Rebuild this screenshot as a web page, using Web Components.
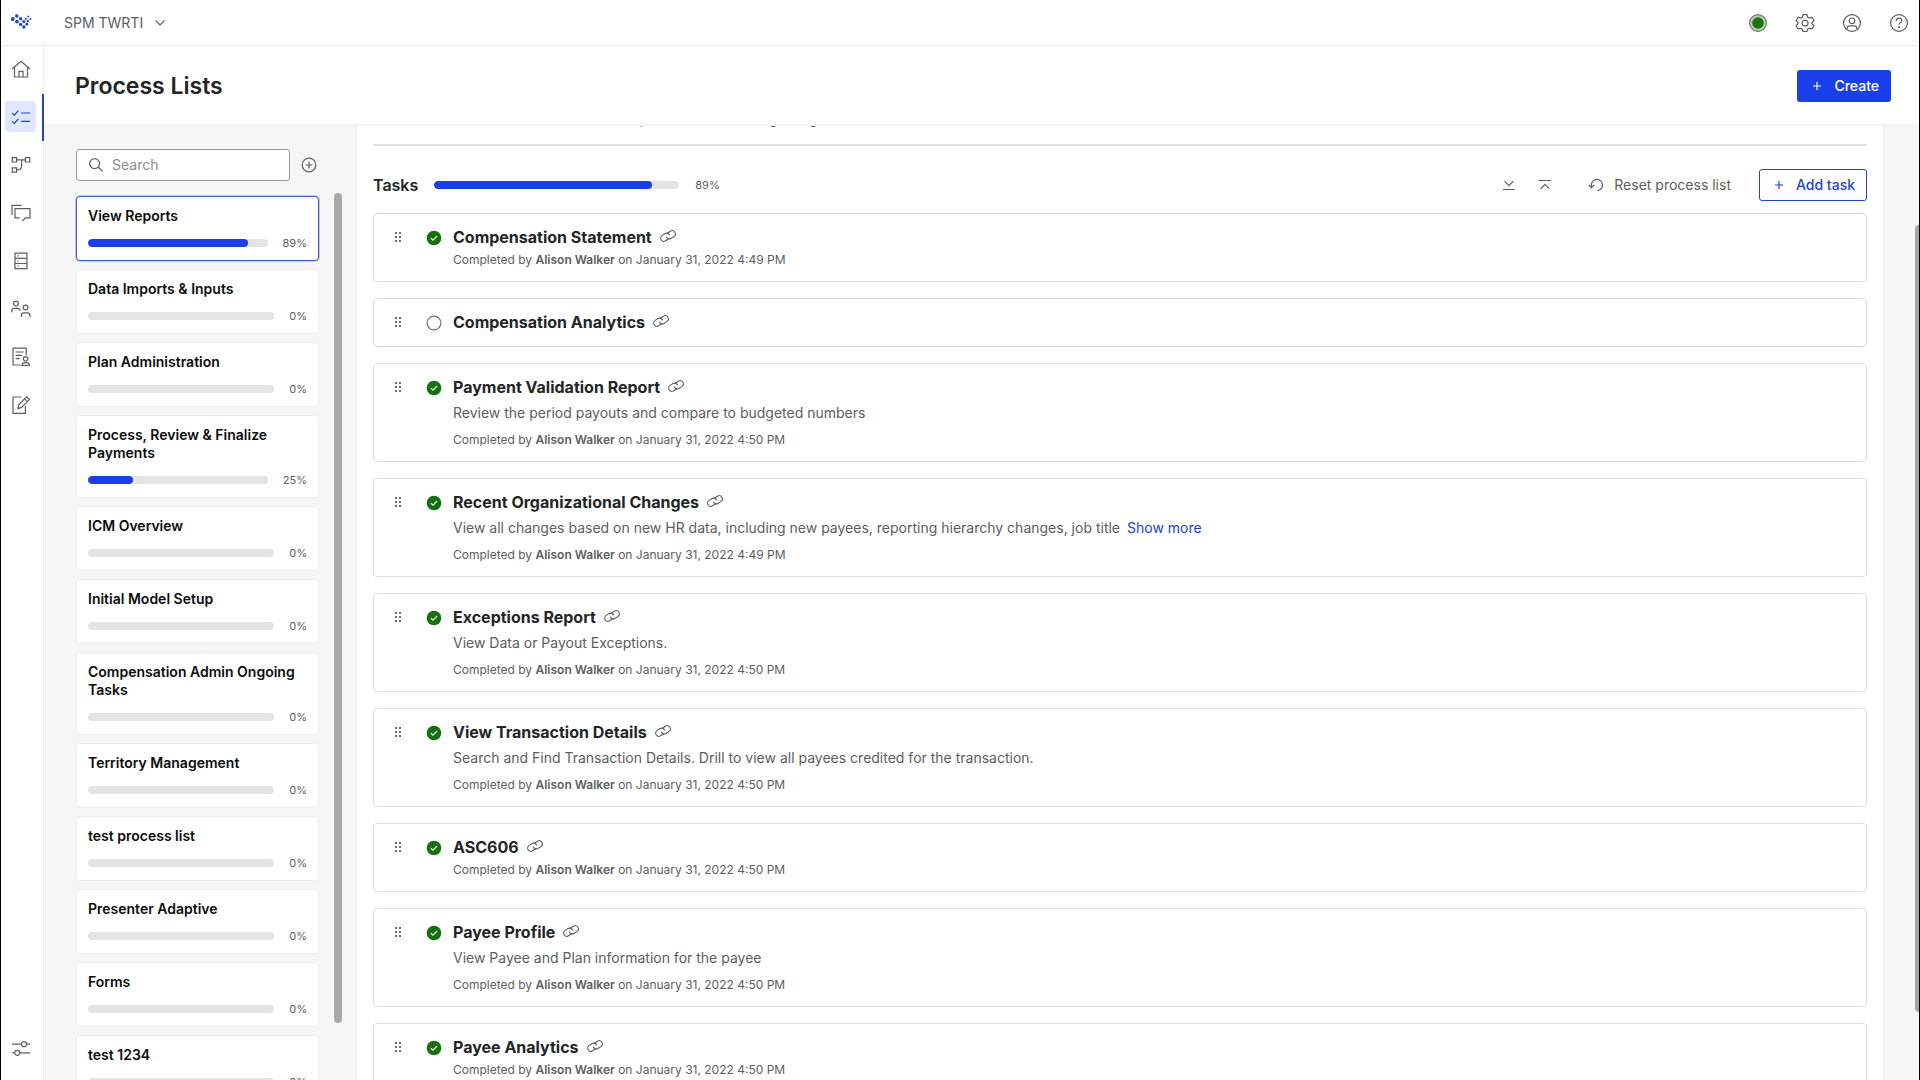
<!DOCTYPE html>
<html lang="en">
<head>
<meta charset="utf-8">
<title>Process Lists</title>
<style>
  html, body { height: 100%; margin: 0; }
  body {
    --ink: #222426;
    --muted: #5c5e60;
    --line: #dedede;
    --hairline: #f0f0f0;
    --surface: #f6f6f6;
    --brand: #1a3fea;
    --brand-ink: #2243cf;
    font: 14px/20px Inter, "Liberation Sans", sans-serif;
    color: var(--muted);
    background: #fff;
    overflow: hidden;
  }
</style>
</head>
<body>
<app-shell>
  <top-bar slot="top" workspace="SPM TWRTI"></top-bar>
  <side-nav slot="nav"></side-nav>
  <page-header slot="header" heading="Process Lists"></page-header>
  <list-panel slot="lists">
    <process-card name="View Reports" percent="89" selected></process-card>
    <process-card name="Data Imports &amp; Inputs" percent="0"></process-card>
    <process-card name="Plan Administration" percent="0"></process-card>
    <process-card name="Process, Review &amp; Finalize Payments" percent="25"></process-card>
    <process-card name="ICM Overview" percent="0"></process-card>
    <process-card name="Initial Model Setup" percent="0"></process-card>
    <process-card name="Compensation Admin Ongoing Tasks" percent="0"></process-card>
    <process-card name="Territory Management" percent="0"></process-card>
    <process-card name="test process list" percent="0"></process-card>
    <process-card name="Presenter Adaptive" percent="0"></process-card>
    <process-card name="Forms" percent="0"></process-card>
    <process-card name="test 1234" percent="0"></process-card>
  </list-panel>
  <task-panel slot="tasks" percent="89">
    <span slot="description">Use this list to access all the standard reports and an existing design</span>
    <task-item name="Compensation Statement" by="Alison Walker" on="January 31, 2022 4:49 PM"></task-item>
    <task-item name="Compensation Analytics"></task-item>
    <task-item name="Payment Validation Report" by="Alison Walker" on="January 31, 2022 4:50 PM">Review the period payouts and compare to budgeted numbers</task-item>
    <task-item name="Recent Organizational Changes" by="Alison Walker" on="January 31, 2022 4:49 PM" more>View all changes based on new HR data, including new payees, reporting hierarchy changes, job title</task-item>
    <task-item name="Exceptions Report" by="Alison Walker" on="January 31, 2022 4:50 PM">View Data or Payout Exceptions.</task-item>
    <task-item name="View Transaction Details" by="Alison Walker" on="January 31, 2022 4:50 PM">Search and Find Transaction Details. Drill to view all payees credited for the transaction.</task-item>
    <task-item name="ASC606" by="Alison Walker" on="January 31, 2022 4:50 PM"></task-item>
    <task-item name="Payee Profile" by="Alison Walker" on="January 31, 2022 4:50 PM">View Payee and Plan information for the payee</task-item>
    <task-item name="Payee Analytics" by="Alison Walker" on="January 31, 2022 4:50 PM"></task-item>
  </task-panel>
</app-shell>

<script>
const BASE = `
  *, *::before, *::after { box-sizing: border-box; }
  :host { display: block; box-sizing: border-box; }
  button { font: inherit; color: inherit; background: none; border: 0; padding: 0; margin: 0; display: inline-flex; align-items: center; justify-content: center; cursor: pointer; }
  a { color: inherit; text-decoration: none; }
  h1, h2, h3, p { margin: 0; }
`;

class BaseElement extends HTMLElement {
  connectedCallback() {
    if (this.shadowRoot) return;
    this.attachShadow({ mode: 'open' }).innerHTML = `<style>${BASE}${this.styles()}</style>${this.markup()}`;
  }
  text(name) {
    return (this.getAttribute(name) || '').replace(/&/g, '&amp;').replace(/</g, '&lt;');
  }
}

/* Each icon: [width, height, body]. Strokes use the current colour. */
const ICONS = {
  logo: [22, 17, `<g fill="#2445c8" stroke="none"><circle cx="2.8" cy="7" r="1.9"/><circle cx="6.8" cy="4" r="1.8"/><circle cx="7" cy="9.6" r="1.9"/><circle cx="10.6" cy="6.8" r="1.8"/><circle cx="10.6" cy="12.4" r="1.7"/><circle cx="13.8" cy="9.6" r="1.6"/><circle cx="13.8" cy="15" r="1.7"/><circle cx="16.8" cy="12.2" r="1.4"/><circle cx="15.8" cy="6.8" r="1.1"/><circle cx="18.2" cy="4.6" r="1"/><circle cx="17.8" cy="9" r="1.2"/><circle cx="20.4" cy="7" r="1"/></g>`],
  chevron: [12, 8, `<path d="M1.5 1.5 6 6l4.5-4.5"/>`],
  home: [20, 18, `<path d="M1 9 10 1.2 19 9M3.5 7.2V17h13V7.2M8 17v-5.6h4V17"/>`],
  checklist: [20, 16, `<path d="M1.2 4.2 3.4 6.2 7.4 1.6M1.2 12.4l2.2 2 4-4.6M10 4h9M10 12.4h9"/>`],
  flow: [20, 18, `<path d="M1.2 1.6h4.4V6H1.2zM14.4 1.6h4.4V6h-4.4zM1.2 11.8h4.4v4.4H1.2zM5.6 3.8h8.8M10.6 3.8v6.2q0 4-5 4"/>`],
  chat: [20, 18, `<path d="M4 4.6h15v9.2h-4.4L11.4 17M4 4.6v9.2h4.6M1 11V1.4h9.6"/>`],
  database: [14, 18, `<path d="M1 1.2h12v15.4H1zM1 6.3h12M1 11.5h12M3 3.8h1.4M3 9h1.4M3 14h1.4"/>`],
  people: [20, 18, `<circle cx="5" cy="3.6" r="2.4"/><circle cx="14.6" cy="7.6" r="2.4"/><path d="M.8 12.4V11q0-2.6 2.8-2.6h2.8q2.4 0 2.6 2.2M10.4 17v-1.4q0-2.8 2.6-2.8h3.2q2.8 0 2.8 2.8V17"/>`],
  report: [20, 20, `<path d="M9.4 18H2V1.2h13.2v7M4.6 5h8M4.6 8.4h6.4M4.6 11.6h4"/><circle cx="14.6" cy="11.8" r="2.2"/><path d="M11 18.4q.2-2.8 2.6-2.8h2q2.6 0 2.8 2.8z"/>`],
  edit: [20, 20, `<path d="M10.4 2H2v16.4h12.4V11M6.8 13.6l1-4L15.6 1.8l2.8 2.8-7.8 7.8zM13.6 3.8l2.8 2.8"/>`],
  sliders: [20, 17, `<path d="M1 4.2h9.4M15.6 4.2H19M1 12.8h2.6M9 12.8h10"/><circle cx="13" cy="4.2" r="2.5"/><circle cx="6.2" cy="12.8" r="2.5"/>`],
  presence: [20, 20, `<circle cx="10" cy="10" r="8.4" fill="#bccbb9" stroke="#6d7a6b"/><circle cx="10" cy="10" r="5.8" fill="#1b750f" stroke="none"/>`],
  gear: [20, 20, `<path d="M8 1.6h4l.6 2.5 1.8 1 2.5-.8 2 3.4-1.9 1.8v1.3l1.9 1.8-2 3.4-2.5-.8-1.8 1-.6 2.3H8l-.6-2.3-1.8-1-2.5.8-2-3.4 1.9-1.8V9.5L1.1 7.7l2-3.4 2.5.8 1.8-1z"/><circle cx="10" cy="10.1" r="3"/>`],
  user: [20, 20, `<circle cx="10" cy="10" r="8.4"/><circle cx="10" cy="7.8" r="2.8"/><path d="M5 16.4v-1.2q.2-2.4 2.8-2.4h4.4q2.6 0 2.8 2.4v1.2"/>`],
  help: [20, 20, `<circle cx="10" cy="10" r="8.4"/><path d="M7.2 8q0-2.8 2.8-2.8T12.8 7.8Q12.8 9.2 11 10 10 10.5 10 11.8"/><circle cx="10" cy="14.3" r=".5"/>`],
  plus: [8, 8, `<path d="M4 0v8M0 4h8"/>`],
  search: [16, 16, `<circle cx="6.6" cy="6.6" r="5"/><path d="M10.3 10.3 14.6 14.4"/>`],
  add: [16, 16, `<circle cx="8" cy="8" r="6.8"/><path d="M8 4.6v6.8M4.6 8h6.8"/>`],
  expand: [14, 12, `<path d="M1 10.5h12M2.6 2.2 7 6.6l4.4-4.4"/>`],
  collapse: [14, 12, `<path d="M1 1.5h12M2.6 9.8 7 5.4l4.4 4.4"/>`],
  reset: [16, 14, `<path d="M3.4 9.2V7A5.6 5.6 0 1 1 9.6 12.6M.8 6.8l2.6 2.8L6.2 7"/>`],
  grip: [8, 12, `<g fill="#66686a" stroke="none"><rect x="1" y="0" width="2" height="2"/><rect x="5" y="0" width="2" height="2"/><rect x="1" y="4" width="2" height="2"/><rect x="5" y="4" width="2" height="2"/><rect x="1" y="8" width="2" height="2"/><rect x="5" y="8" width="2" height="2"/></g>`],
  done: [16, 16, `<circle cx="8" cy="8" r="7.3" fill="#17700f" stroke="none"/><path d="M4.9 8.2 7 10.2l4.1-4.2" stroke="#e6f0e5"/>`],
  open: [16, 16, `<circle cx="8" cy="8" r="6.9" stroke="#707274"/>`],
  link: [18, 14, `<g transform="rotate(-32 9 7)" stroke-width="1.1"><path d="M8.6 9.8H4.4a3.2 3.2 0 0 1 0-6.400h3.400a3.200 3.200 0 0 1 3 4"/><path d="M9.400 4.200h4.200a3.200 3.200 0 0 1 0 6.400h-3.400a3.200 3.200 0 0 1-3-4"/></g>`]
};

customElements.define('app-icon', class extends BaseElement {
  styles() { return `:host { display: inline-flex; flex: none; } svg { display: block; }`; }
  markup() {
    const [w, h, body] = ICONS[this.getAttribute('name')];
    return `<svg width="${w}" height="${h}" viewBox="0 0 ${w} ${h}" fill="none" stroke="currentColor" stroke-width="1.2" aria-hidden="true">${body}</svg>`;
  }
});

customElements.define('progress-bar', class extends BaseElement {
  styles() {
    return `
      :host { height: 8px; border-radius: 4px; background: #e4e4e4; overflow: hidden; }
      div { height: 100%; border-radius: 4px; background: var(--brand); }
    `;
  }
  markup() {
    const v = this.getAttribute('value');
    return `<div role="progressbar" aria-valuenow="${v}" style="width:${v}%"></div>`;
  }
});

customElements.define('app-shell', class extends BaseElement {
  styles() {
    return `
      :host { height: 100vh; display: flex; flex-direction: column; border: solid #000; border-width: 0 1px; overflow: hidden; }
      .body { flex: 1; min-height: 0; display: flex; }
      .page { flex: 1; min-width: 0; display: flex; flex-direction: column; }
      .content { flex: 1; min-height: 0; display: flex; background: var(--surface); }
      .gutter { flex: none; width: 35px; display: flex; justify-content: flex-end; padding-top: 99px; }
      .thumb { width: 4px; height: 787px; max-height: 100%; border-radius: 4px 0 0 4px; background: #a6a6a6; }
      ::slotted(task-panel) { flex: 1; min-width: 0; }
    `;
  }
  markup() {
    return `
      <slot name="top"></slot>
      <div class="body">
        <slot name="nav"></slot>
        <div class="page">
          <slot name="header"></slot>
          <div class="content">
            <slot name="lists"></slot>
            <slot name="tasks"></slot>
            <div class="gutter"><div class="thumb"></div></div>
          </div>
        </div>
      </div>`;
  }
});

customElements.define('top-bar', class extends BaseElement {
  styles() {
    return `
      :host { flex: none; height: 46px; border-bottom: 1px solid #e9e9e9; }
      header { height: 100%; display: flex; align-items: center; padding: 0 10px 0 9px; }
      .workspace { margin-left: 32px; gap: 11px; }
      .actions { margin-left: auto; display: flex; gap: 27px; }
    `;
  }
  markup() {
    return `
      <header>
        <a href="#" aria-label="Start"><app-icon name="logo"></app-icon></a>
        <button class="workspace">${this.text('workspace')}<app-icon name="chevron"></app-icon></button>
        <div class="actions">
          <button aria-label="Status"><app-icon name="presence"></app-icon></button>
          <button aria-label="Settings"><app-icon name="gear"></app-icon></button>
          <button aria-label="Account"><app-icon name="user"></app-icon></button>
          <button aria-label="Help"><app-icon name="help"></app-icon></button>
        </div>
      </header>`;
  }
});

customElements.define('side-nav', class extends BaseElement {
  styles() {
    return `
      :host { flex: none; width: 43px; border-right: 1px solid var(--hairline); background: #fff; }
      nav { height: 100%; display: flex; flex-direction: column; gap: 1px; padding-bottom: 7px; }
      a { flex: none; height: 47px; display: flex; align-items: center; padding: 0 0 2px 4px; }
      a:last-child { margin-top: auto; }
      span { width: 31px; height: 31px; border-radius: 4px; display: grid; place-items: center; }
      a[aria-current] { color: var(--brand-ink); margin-right: -1px; border-right: 2px solid var(--brand-ink); }
      a[aria-current] span { background: #dfe6fd; }
    `;
  }
  markup() {
    const items = [['home', 'Home'], ['checklist', 'Process lists'], ['flow', 'Flows'], ['chat', 'Messages'], ['database', 'Data'], ['people', 'People'], ['report', 'Statements'], ['edit', 'Forms'], ['sliders', 'Preferences']];
    return `<nav>${items.map(([icon, label]) =>
      `<a href="#" aria-label="${label}"${icon === 'checklist' ? ' aria-current="page"' : ''}><span><app-icon name="${icon}"></app-icon></span></a>`).join('')}</nav>`;
  }
});

customElements.define('page-header', class extends BaseElement {
  styles() {
    return `
      :host { flex: none; display: flex; align-items: center; justify-content: space-between; height: 80px; padding: 2px 28px 0 31px; border-bottom: 2px solid #f4f4f4; background: #fff; }
      h1 { font-size: 23px; line-height: 32px; font-weight: 600; color: var(--ink); }
      button { height: 32px; padding: 0 12px 0 16px; gap: 13px; border-radius: 3px; background: var(--brand); color: #fff; font-weight: 500; }
    `;
  }
  markup() {
    return `<h1>${this.text('heading')}</h1><button><app-icon name="plus"></app-icon>Create</button>`;
  }
});

customElements.define('list-panel', class extends BaseElement {
  styles() {
    return `
      :host { flex: none; width: 312px; padding: 23px 0 0 32px; display: flex; flex-direction: column; }
      .tools { flex: none; display: flex; align-items: center; gap: 11px; }
      label { width: 214px; height: 32px; display: flex; align-items: center; gap: 8px; padding: 0 11px; border: 1px solid #98999b; border-radius: 3px; background: #fff; }
      input { flex: 1; min-width: 0; border: 0; outline: 0; padding: 0; background: none; font: inherit; color: var(--ink); }
      input::placeholder { color: #8b8d8f; opacity: 1; }
      .scroll { flex: 1; min-height: 0; margin: 12px 0 0 -1px; padding-left: 1px; display: flex; gap: 15px; overflow: hidden; }
      .cards { flex: none; width: 243px; padding-top: 3px; display: flex; flex-direction: column; gap: 8px; }
      .thumb { width: 8px; height: calc(100% - 57px); border-radius: 4px; background: #a9a9a9; }
    `;
  }
  markup() {
    return `
      <div class="tools">
        <label><app-icon name="search"></app-icon><input type="text" placeholder="Search" aria-label="Search"></label>
        <button aria-label="Add process list"><app-icon name="add"></app-icon></button>
      </div>
      <div class="scroll"><div class="cards"><slot></slot></div><div class="thumb"></div></div>`;
  }
});

customElements.define('process-card', class extends BaseElement {
  styles() {
    return `
      :host { flex: none; padding: 10px 11px 9px; border: 1px solid #ededed; border-radius: 4px; background: #fff; cursor: pointer; }
      :host([selected]) { border-color: #3f5bd6; box-shadow: 0 0 0 1px #b9c6fa; }
      h3 { font-size: 14px; line-height: 18px; font-weight: 600; color: #0b0b0c; }
      div { display: flex; align-items: center; gap: 15px; margin-top: 10px; font-size: 11px; line-height: 16px; }
      progress-bar { flex: 1; }
    `;
  }
  markup() {
    const p = this.text('percent');
    return `<h3>${this.text('name')}</h3><div><progress-bar value="${p}"></progress-bar><span>${p}%</span></div>`;
  }
});

customElements.define('task-panel', class extends BaseElement {
  styles() {
    return `
      :host { padding: 0 16px; border: solid #ececec; border-width: 0 1px; background: #fff; overflow: hidden; }
      p { margin-top: -17px; }
      hr { margin: 15px 0 23px; border: 0; height: 2px; background: #dfdfdf; }
      .bar { display: flex; align-items: center; margin-bottom: 12px; }
      h2 { font-size: 16px; line-height: 20px; font-weight: 600; color: var(--ink); }
      progress-bar { width: 245px; margin: 0 16px; }
      .percent { font-size: 11px; line-height: 16px; }
      .actions { margin-left: auto; display: flex; align-items: center; }
      .icon { margin-right: 22px; }
      .reset { margin: 0 28px 0 14px; gap: 10px; }
      .add { height: 32px; padding: 0 11px 0 15px; gap: 13px; border: 1px solid var(--brand-ink); border-radius: 3px; color: var(--brand-ink); font-weight: 500; }
      .tasks { display: flex; flex-direction: column; gap: 16px; }
    `;
  }
  markup() {
    const p = this.text('percent');
    return `
      <p><slot name="description"></slot></p>
      <hr>
      <div class="bar">
        <h2>Tasks</h2><progress-bar value="${p}"></progress-bar><span class="percent">${p}%</span>
        <div class="actions">
          <button class="icon" aria-label="Expand all"><app-icon name="expand"></app-icon></button>
          <button class="icon" aria-label="Collapse all"><app-icon name="collapse"></app-icon></button>
          <button class="reset"><app-icon name="reset"></app-icon>Reset process list</button>
          <button class="add"><app-icon name="plus"></app-icon>Add task</button>
        </div>
      </div>
      <div class="tasks"><slot></slot></div>`;
  }
});

customElements.define('task-item', class extends BaseElement {
  styles() {
    return `
      :host { display: flex; align-items: flex-start; padding: 13px 20px; border: 1px solid var(--line); border-radius: 4px; }
      .grip, .state { flex: none; height: 21px; }
      .grip { width: 8px; }
      .state { margin: 0 11px 0 24px; }
      .title { display: flex; align-items: center; gap: 7px; }
      h3 { font-size: 16px; line-height: 21px; font-weight: 700; color: var(--ink); }
      .text { margin-top: 5px; }
      .text a { margin-left: 7px; color: var(--brand-ink); }
      .done { margin-top: 4px; font-size: 12px; line-height: 16px; }
      .text + .done { margin-top: 9px; }
      b { font-weight: 600; }
    `;
  }
  markup() {
    const by = this.text('by');
    const hasText = this.textContent.trim() !== '';
    return `
      <button class="grip" aria-label="Move"><app-icon name="grip"></app-icon></button>
      <button class="state" aria-label="Toggle completed"><app-icon name="${by ? 'done' : 'open'}"></app-icon></button>
      <div>
        <div class="title"><h3>${this.text('name')}</h3><a href="#" aria-label="Open link"><app-icon name="link"></app-icon></a></div>
        ${hasText ? `<p class="text"><slot></slot>${this.hasAttribute('more') ? '<a href="#">Show more</a>' : ''}</p>` : ''}
        ${by ? `<p class="done">Completed by <b>${by}</b> on ${this.text('on')}</p>` : ''}
      </div>`;
  }
});
</script>
</body>
</html>
